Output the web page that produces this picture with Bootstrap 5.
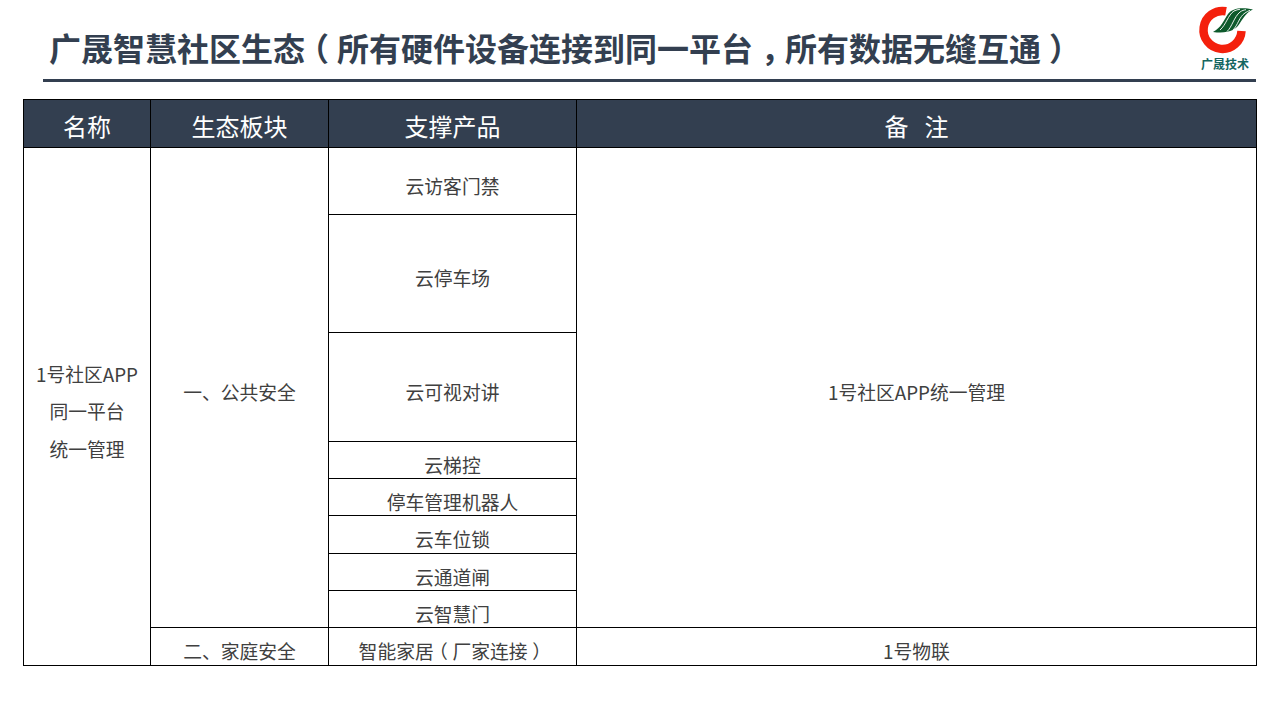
<!DOCTYPE html>
<html lang="zh">
<head>
<meta charset="utf-8">
<title>广晟智慧社区生态</title>
<link href="https://cdn.jsdelivr.net/npm/bootstrap@5.3.0/dist/css/bootstrap.min.css" rel="stylesheet">
<style>
html,body{height:720px;overflow:hidden;background:#fff}
body{font-family:"Noto Sans CJK SC","Noto Sans",sans-serif;color:#333f50}
.slide-head{height:82px;margin-left:43px;margin-right:24px;border-bottom:3px solid #333f50;padding-left:6px;padding-top:24px}
.slide-title{font-size:32px;font-weight:700;line-height:46px;margin:0;color:#333f50;white-space:nowrap}
.punct{font-feature-settings:"halt";padding:0 .25em}
.brand{position:absolute;left:1190px;top:0;width:70px;text-align:center}
.brand svg{display:block;width:70px;height:57px}
.brand-name{font-size:12px;font-weight:700;color:#14665f;line-height:14px}
.table-wrap{margin:17px 23px 0 23px}
.eco{table-layout:fixed;width:1233px;border-collapse:collapse;margin:0;font-size:18.8px}
.eco th,.eco td{border:1px solid #000;text-align:center;vertical-align:middle;padding:9px 0 0;line-height:24px;color:#404040;background:#fff;box-shadow:none}
.eco th{background:#333f50;color:#fff;font-size:24px;font-weight:400;padding-top:4px;line-height:30px}
.eco .stack{line-height:37.5px;padding-top:9px}
.r48{height:48px}.r67{height:67px}.r118{height:118px}.r109{height:109px}.r37{height:37px}.r38{height:38px}
</style>
</head>
<body>
<header class="slide-head position-relative">
<h1 class="slide-title">广晟智慧社区生态<span class="punct">（</span>所有硬件设备连接到同一平台<span class="punct">，</span>所有数据无缝互通<span class="punct">）</span></h1>
</header>
<div class="brand">
<svg viewBox="0 0 70 57" aria-hidden="true">
<path d="M36 11.300A19 19 0 1 0 51.500 31" fill="none" stroke="#f4200c" stroke-width="8.500"/>
<path d="M23 32C31 28 34 20 38 14C42 8 52 7 63 9.500C57 12 54 17 50 23C46 30 38 34 23 32Z" fill="#0d5a2c"/>
<path d="M30 30C36 25 38 15 44 11C46 10 48 9.500 50 9.300M37 31.500C42 27 44 17 50 12C52 10.500 54 10 56 9.700M43 30C48 25 49 17 55 13C56.500 12 58 11 60 10.300" stroke="#fff" stroke-width=".9" fill="none"/>
</svg>
<div class="brand-name">广晟技术</div>
</div>
<div class="table-wrap">
<table class="table eco">
<colgroup><col style="width:127px"><col style="width:178px"><col style="width:248px"><col style="width:680px"></colgroup>
<thead>
<tr class="r48"><th>名称</th><th>生态板块</th><th>支撑产品</th><th>备&nbsp;&nbsp;&nbsp;注</th></tr>
</thead>
<tbody>
<tr class="r67"><td rowspan="9" class="stack">1号社区APP<br>同一平台<br>统一管理</td><td rowspan="8">一、公共安全</td><td>云访客门禁</td><td rowspan="8">1号社区APP统一管理</td></tr>
<tr class="r118"><td>云停车场</td></tr>
<tr class="r109"><td>云可视对讲</td></tr>
<tr class="r37"><td>云梯控</td></tr>
<tr class="r37"><td>停车管理机器人</td></tr>
<tr class="r38"><td>云车位锁</td></tr>
<tr class="r37"><td>云通道闸</td></tr>
<tr class="r37"><td>云智慧门</td></tr>
<tr class="r38"><td>二、家庭安全</td><td>智能家居<span class="punct">（</span>厂家连接<span class="punct">）</span></td><td>1号物联</td></tr>
</tbody>
</table>
</div>
<script src="https://cdn.jsdelivr.net/npm/bootstrap@5.3.0/dist/js/bootstrap.bundle.min.js"></script>
</body>
</html>
